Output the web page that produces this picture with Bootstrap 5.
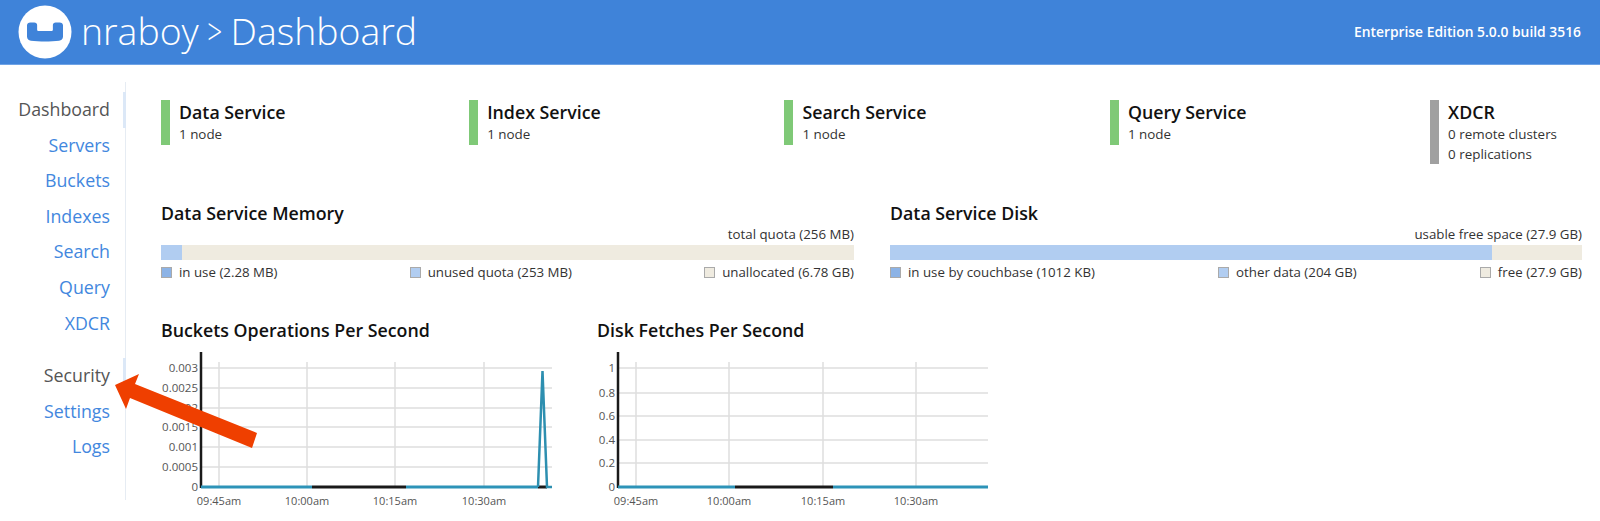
<!DOCTYPE html>
<html lang="en">
<head>
    <meta charset="UTF-8">
    <title>nraboy > Dashboard</title>
    <link href="https://cdn.jsdelivr.net/npm/bootstrap@5.3.0/dist/css/bootstrap.min.css" rel="stylesheet">
    <style>
        body {
            font-family: "Open Sans", sans-serif;
            color: #333;
            height: 521px;
            overflow: hidden;
        }

        /* Header */
        .cb-header {
            height: 65px;
            background-color: #3f83d9;
            border-bottom: 1px solid #6fa3e6;
            padding: 0 18px;
        }

        .cb-title {
            font-size: 37.4px;
            font-weight: 300;
            line-height: 1;
            margin: -2px 0 0 9px;
        }

        .cb-chevron {
            display: inline-block;
            transform: scaleX(.7);
            margin: 0 -4px 0 -5px;
        }

        .cb-version {
            font-size: 13.85px;
            font-weight: 600;
            padding-right: 1px;
        }

        /* Sidebar */
        .cb-side {
            width: 126px;
            height: 418px;
            margin-top: 17px;
            padding-top: 10px;
            border-right: 1px solid #e6ecf3;
            flex-shrink: 0;
        }

        .cb-side .nav-link {
            font-size: 17.8px;
            line-height: 35.6px;
            height: 35.6px;
            padding: 0 16px 0 0;
            margin-right: -1px;
            text-align: right;
            color: #4287de;
        }

        .cb-side .nav-link.active {
            color: #555;
            padding-right: 13px;
            border-right: 3px solid #dce8f7;
        }

        .cb-side .cb-sec {
            color: #333;
        }

        .cb-gap {
            height: 17px;
        }

        /* Main */
        .cb-main {
            padding: 35px 18px 0 35px;
            flex-grow: 1;
            min-width: 0;
        }

        .cb-services {
            padding-right: 25px;
            height: 102px;
        }

        .cb-service {
            border-left: 9px solid #7fc977;
            padding-left: 9px;
            height: 45px;
            font-size: 13.4px;
            line-height: 20px;
            color: #333;
        }

        .cb-service.cb-off {
            border-left-color: #a0a0a0;
            height: 64px;
        }

        .cb-service-name {
            font-size: 17.8px;
            font-weight: 600;
            line-height: 22px;
            padding-top: 1px;
            height: 24px;
            color: #111;
        }

        .cb-h {
            font-size: 17.8px;
            font-weight: 600;
            color: #111;
            line-height: 22px;
            margin: 0;
        }

        .cb-usage {
            height: 117px;
        }

        .cb-mem {
            width: 693px;
        }

        .cb-disk {
            width: 692px;
            margin-left: 36px;
        }

        .cb-total {
            font-size: 13.3px;
            line-height: 18px;
            text-align: right;
            margin-top: 1px;
        }

        .cb-bar {
            height: 15px;
            border-radius: 0;
            background-color: #efebe0;
            margin-top: 2px;
        }

        .cb-bar .progress-bar {
            background-color: #b1cdf1;
        }

        .cb-legend {
            font-size: 13.3px;
            line-height: 18px;
            margin-top: 3px;
        }

        .cb-swatch {
            display: inline-block;
            width: 11px;
            height: 11px;
            margin-right: 7px;
            vertical-align: -1px;
            border: 1px solid #aaa;
        }

        .cb-s1 { background-color: #8cb3e6; }
        .cb-s2 { background-color: #b1cdf1; }
        .cb-s3 { background-color: #efebe0; }

        .cb-chart1 {
            width: 436px;
        }

        .cb-chart-svg {
            display: block;
            overflow: visible;
            margin-top: 11px;
        }

        .cb-chart-svg text {
            font-family: "Open Sans", sans-serif;
            font-size: 11.5px;
            fill: #555;
        }

        .cb-chart-svg .cb-xlabels text {
            font-size: 11px;
        }

        .cb-grid {
            stroke: #dedede;
            stroke-width: 1.5;
        }

        /* Arrow over the sidebar */
        .cb-arrow {
            position: absolute;
            left: 0;
            top: 0;
            pointer-events: none;
        }
    </style>
</head>
<body>

    <!-- Header -->
    <header class="cb-header d-flex align-items-center text-white">
        <svg width="54" height="54" viewBox="0 0 54 54">
            <circle cx="27" cy="27" r="26.5" fill="#fff"/>
            <path fill="#3f83d9" transform="translate(27 0) scale(1.125 1) translate(-27 0)" d="M11 20.500c0-1.800 1.200-3 3-3h3.500c1.500 0 2.500 1 2.500 2.500v4.500c0 1 .5 1.500 1.500 1.500h11c1 0 1.500-.5 1.500-1.500v-4.500c0-1.500 1-2.500 2.500-2.500h3.500c1.800 0 3 1.200 3 3v11c0 2.500-1.500 4-3.500 4.300-3 .5-8.500 .7-12.500 .7s-9.500-.2-12.500-.7c-2-.3-3.500-1.800-3.500-4.300z"/>
        </svg>
        <h1 class="cb-title">nraboy <span class="cb-chevron">&gt;</span> Dashboard</h1>
        <div class="cb-version ms-auto">Enterprise Edition 5.0.0 build 3516</div>
    </header>

    <div class="d-flex">
        <!-- Sidebar -->
        <nav class="cb-side nav flex-column">
            <a class="nav-link active" href="#">Dashboard</a>
            <a class="nav-link" href="#">Servers</a>
            <a class="nav-link" href="#">Buckets</a>
            <a class="nav-link" href="#">Indexes</a>
            <a class="nav-link" href="#">Search</a>
            <a class="nav-link" href="#">Query</a>
            <a class="nav-link" href="#">XDCR</a>
            <div class="cb-gap"></div>
            <a class="nav-link active cb-sec" href="#">Security</a>
            <a class="nav-link" href="#">Settings</a>
            <a class="nav-link" href="#">Logs</a>
        </nav>

        <!-- Main Content -->
        <main class="cb-main">
            <div class="cb-services d-flex justify-content-between align-items-start">
                <div class="cb-service">
                    <div class="cb-service-name">Data Service</div>
                    <div>1 node</div>
                </div>
                <div class="cb-service">
                    <div class="cb-service-name">Index Service</div>
                    <div>1 node</div>
                </div>
                <div class="cb-service">
                    <div class="cb-service-name">Search Service</div>
                    <div>1 node</div>
                </div>
                <div class="cb-service">
                    <div class="cb-service-name">Query Service</div>
                    <div>1 node</div>
                </div>
                <div class="cb-service cb-off">
                    <div class="cb-service-name">XDCR</div>
                    <div>0 remote clusters</div>
                    <div>0 replications</div>
                </div>
            </div>

            <div class="cb-usage d-flex">
                <div class="cb-mem">
                    <h2 class="cb-h">Data Service Memory</h2>
                    <div class="cb-total">total quota (256 MB)</div>
                    <div class="progress cb-bar">
                        <div class="progress-bar" style="width: 3.1%"></div>
                    </div>
                    <div class="cb-legend d-flex justify-content-between">
                        <span><i class="cb-swatch cb-s1"></i>in use (2.28 MB)</span>
                        <span><i class="cb-swatch cb-s2"></i>unused quota (253 MB)</span>
                        <span><i class="cb-swatch cb-s3"></i>unallocated (6.78 GB)</span>
                    </div>
                </div>
                <div class="cb-disk">
                    <h2 class="cb-h">Data Service Disk</h2>
                    <div class="cb-total">usable free space (27.9 GB)</div>
                    <div class="progress cb-bar">
                        <div class="progress-bar" style="width: 87%"></div>
                    </div>
                    <div class="cb-legend d-flex justify-content-between">
                        <span><i class="cb-swatch cb-s1"></i>in use by couchbase (1012 KB)</span>
                        <span><i class="cb-swatch cb-s2"></i>other data (204 GB)</span>
                        <span><i class="cb-swatch cb-s3"></i>free (27.9 GB)</span>
                    </div>
                </div>
            </div>

            <div class="d-flex">
                <div class="cb-chart1">
                    <h2 class="cb-h">Buckets Operations Per Second</h2>
                    <svg class="cb-chart-svg" width="400" height="160" viewBox="0 0 400 160">
                        <g class="cb-grid">
                            <path d="M58 10V135M146 10V135M234 10V135M323 10V135"/>
                            <path d="M40 16H391M40 36H391M40 56H391M40 75H391M40 95H391M40 115H391"/>
                        </g>
                        <g text-anchor="end">
                            <text x="37" y="20">0.003</text>
                            <text x="37" y="40">0.0025</text>
                            <text x="37" y="60">0.002</text>
                            <text x="37" y="79">0.0015</text>
                            <text x="37" y="99">0.001</text>
                            <text x="37" y="119">0.0005</text>
                            <text x="37" y="139">0</text>
                        </g>
                        <g class="cb-xlabels" text-anchor="middle">
                            <text x="58" y="153">09:45am</text>
                            <text x="146" y="153">10:00am</text>
                            <text x="234" y="153">10:15am</text>
                            <text x="323" y="153">10:30am</text>
                        </g>
                        <path d="M40 0V136" stroke="#1a1a1a" stroke-width="2.500" fill="none"/>
                        <path d="M40 135H151" stroke="#2d93b8" stroke-width="3"/>
                        <path d="M151 135H245" stroke="#1a1a1a" stroke-width="3"/>
                        <path d="M245 135H377" stroke="#2d93b8" stroke-width="3"/>
                        <path d="M377 135H386" stroke="#1a1a1a" stroke-width="3"/>
                        <path d="M377 135L381.500 19L386 135H391" stroke="#2d8fb0" stroke-width="2.500" fill="none"/>
                    </svg>
                </div>
                <div>
                    <h2 class="cb-h">Disk Fetches Per Second</h2>
                    <svg class="cb-chart-svg" width="400" height="160" viewBox="0 0 400 160">
                        <g class="cb-grid">
                            <path d="M39 10V135M132 10V135M226 10V135M319 10V135"/>
                            <path d="M21 16H391M21 41H391M21 64H391M21 88H391M21 111H391"/>
                        </g>
                        <g text-anchor="end">
                            <text x="18" y="20">1</text>
                            <text x="18" y="45">0.8</text>
                            <text x="18" y="68">0.6</text>
                            <text x="18" y="92">0.4</text>
                            <text x="18" y="115">0.2</text>
                            <text x="18" y="139">0</text>
                        </g>
                        <g class="cb-xlabels" text-anchor="middle">
                            <text x="39" y="153">09:45am</text>
                            <text x="132" y="153">10:00am</text>
                            <text x="226" y="153">10:15am</text>
                            <text x="319" y="153">10:30am</text>
                        </g>
                        <path d="M21 0V136" stroke="#1a1a1a" stroke-width="2.500" fill="none"/>
                        <path d="M21 135H138" stroke="#2d93b8" stroke-width="3"/>
                        <path d="M138 135H236" stroke="#1a1a1a" stroke-width="3"/>
                        <path d="M236 135H391" stroke="#2d93b8" stroke-width="3"/>
                    </svg>
                </div>
            </div>
        </main>
    </div>

    <!-- Orange arrow annotation -->
    <svg class="cb-arrow" width="300" height="521">
        <polygon fill="#ef3f00" points="115,385 139,374 135,384 257,433 252,448 130,398 126,409"/>
    </svg>

    <script src="https://cdn.jsdelivr.net/npm/bootstrap@5.3.0/dist/js/bootstrap.bundle.min.js"></script>
</body>
</html>
